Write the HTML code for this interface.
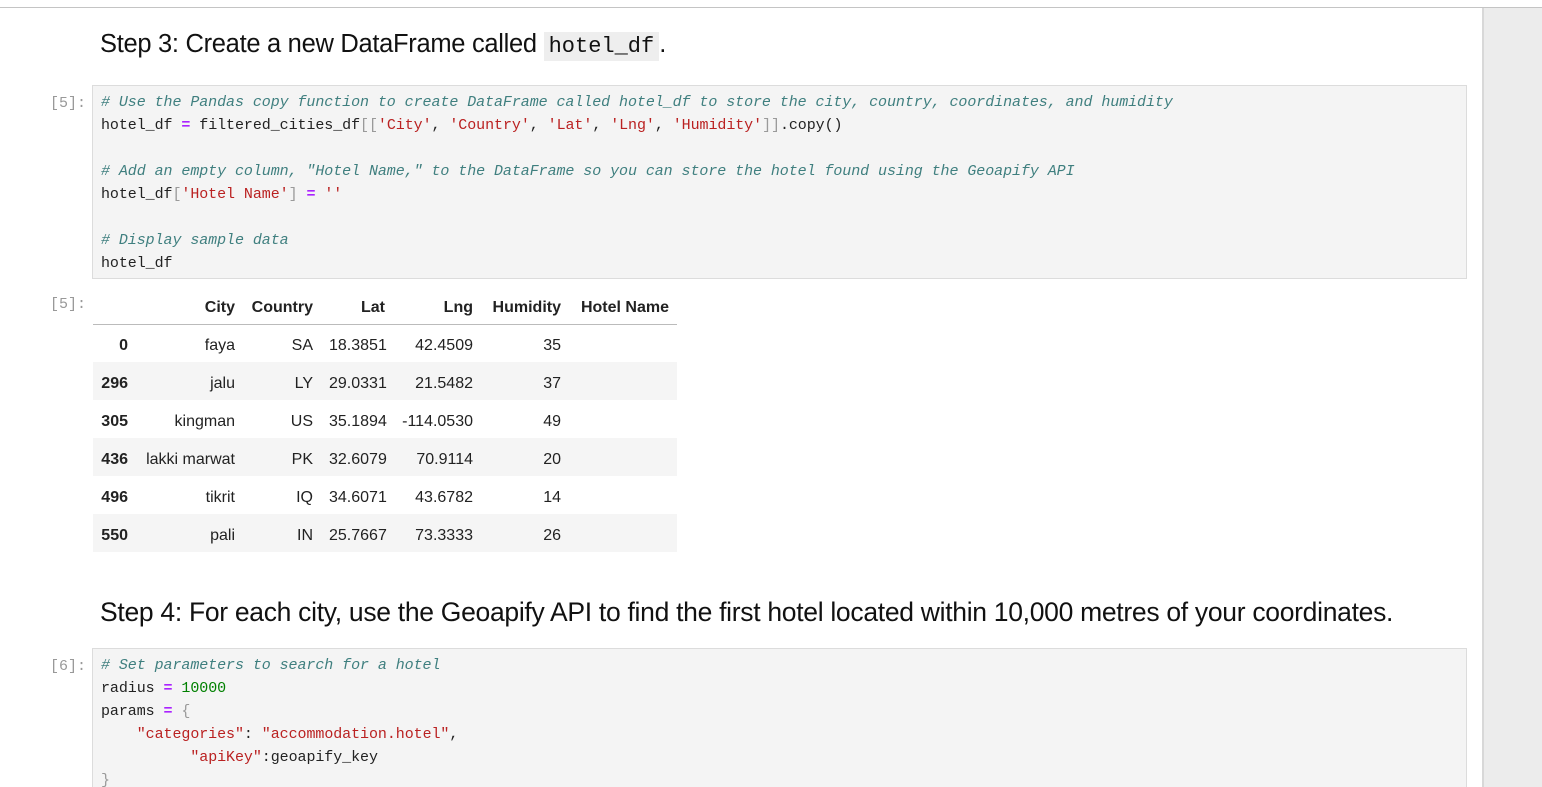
<!DOCTYPE html>
<html><head><meta charset="utf-8"><style>
html,body{margin:0;width:1542px;height:787px;overflow:hidden}
body{background:#fff;font-family:"Liberation Sans",sans-serif;position:relative}
.top{position:absolute;left:0;top:0;width:1542px;height:7px;background:#fff;border-bottom:1px solid #c4c4c4}
.side{position:absolute;left:1482px;top:8px;width:60px;height:779px;background:#ececec;border-left:2px solid #d8d8d8}
h2{position:absolute;left:100px;margin:0;font-weight:normal;font-size:26.5px;color:#111;white-space:nowrap;letter-spacing:-0.3px}
h2 code{font-family:"Liberation Mono",monospace;background:#eee;padding:2px 5px;font-size:22px;letter-spacing:0}
.cell{position:absolute;left:92px;width:1375px;background:#f4f4f4;border:1px solid #dcdcdc;box-sizing:border-box}
pre{margin:0;padding:5px 8px;font-family:"Liberation Mono",monospace;font-size:15px;letter-spacing:-0.07px;line-height:23px;color:#222}
.c{color:#3f7f7f;font-style:italic}.s{color:#ba2121}.o{color:#aa22ff;font-weight:bold}.n{color:#008000}.b{color:#9a9a9a}
.p{position:absolute;left:50px;font-family:"Liberation Mono",monospace;font-size:15px;color:#999}
table{position:absolute;left:93px;top:292px;border-collapse:collapse;font-size:16px;color:#222;table-layout:fixed;width:584px}
th,td{text-align:right;padding:0 8px;height:38px;box-sizing:border-box;white-space:nowrap}
thead th{height:32px;border-bottom:1px solid #bbb;vertical-align:middle}
tbody td,tbody th{padding-top:6px}
tbody tr:nth-child(even){background:#f5f5f5}
</style></head><body>
<div class="top"></div><div class="side"></div>
<h2 style="top:30px;font-size:25.5px">Step 3: Create a new DataFrame called <code>hotel_df</code>.</h2>
<div class="p" style="top:95px">[5]:</div>
<div class="cell" style="top:85px;height:194px"><pre><span class="c"># Use the Pandas copy function to create DataFrame called hotel_df to store the city, country, coordinates, and humidity</span>
hotel_df <span class="o">=</span> filtered_cities_df<span class="b">[[</span><span class="s">'City'</span>, <span class="s">'Country'</span>, <span class="s">'Lat'</span>, <span class="s">'Lng'</span>, <span class="s">'Humidity'</span><span class="b">]]</span>.copy()

<span class="c"># Add an empty column, "Hotel Name," to the DataFrame so you can store the hotel found using the Geoapify API</span>
hotel_df<span class="b">[</span><span class="s">'Hotel Name'</span><span class="b">]</span> <span class="o">=</span> <span class="s">''</span>

<span class="c"># Display sample data</span>
hotel_df</pre></div>
<div class="p" style="top:296px">[5]:</div>
<table><colgroup><col style="width:43px"><col style="width:107px"><col style="width:78px"><col style="width:72px"><col style="width:88px"><col style="width:88px"><col style="width:108px"></colgroup>
<thead><tr><th></th><th>City</th><th>Country</th><th>Lat</th><th>Lng</th><th>Humidity</th><th>Hotel Name</th></tr></thead>
<tbody>
<tr><th>0</th><td>faya</td><td>SA</td><td>18.3851</td><td>42.4509</td><td>35</td><td></td></tr>
<tr><th>296</th><td>jalu</td><td>LY</td><td>29.0331</td><td>21.5482</td><td>37</td><td></td></tr>
<tr><th>305</th><td>kingman</td><td>US</td><td>35.1894</td><td>-114.0530</td><td>49</td><td></td></tr>
<tr><th>436</th><td>lakki marwat</td><td>PK</td><td>32.6079</td><td>70.9114</td><td>20</td><td></td></tr>
<tr><th>496</th><td>tikrit</td><td>IQ</td><td>34.6071</td><td>43.6782</td><td>14</td><td></td></tr>
<tr><th>550</th><td>pali</td><td>IN</td><td>25.7667</td><td>73.3333</td><td>26</td><td></td></tr>
</tbody></table>
<h2 style="top:597px">Step 4: For each city, use the Geoapify API to find the first hotel located within 10,000 metres of your coordinates.</h2>
<div class="p" style="top:658px">[6]:</div>
<div class="cell" style="top:648px;height:160px"><pre><span class="c"># Set parameters to search for a hotel</span>
radius <span class="o">=</span> <span class="n">10000</span>
params <span class="o">=</span> <span class="b">{</span>
    <span class="s">"categories"</span>: <span class="s">"accommodation.hotel"</span>,
          <span class="s">"apiKey"</span>:geoapify_key
<span class="b">}</span></pre></div>
</body></html>
